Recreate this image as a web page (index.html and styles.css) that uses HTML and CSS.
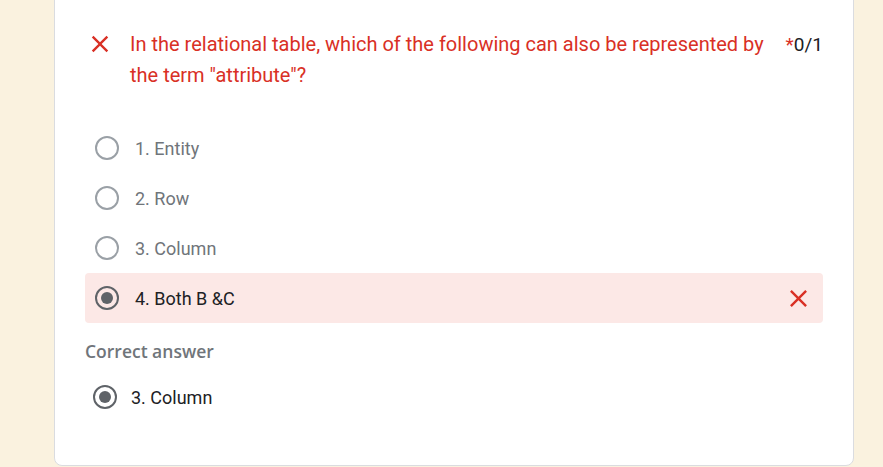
FILE: index.html
```html
<!DOCTYPE html>
<html>
<head>
<meta charset="utf-8">
<link rel="stylesheet" href="styles.css">
</head>
<body>
<div class="card">
  <div class="question">
    <svg class="q-icon" width="28" height="28" viewBox="0 0 24 24"><path d="M19 6.41 17.59 5 12 10.59 6.41 5 5 6.41 10.59 12 5 17.59 6.41 19 12 13.41 17.59 19 19 17.59 13.41 12z" fill="#d93025"/></svg>
    <div class="q-text">In the relational table, which of the following can also be represented by the term "attribute"?</div>
    <div class="score"><span class="star">*</span>0/1</div>
  </div>
  <div class="options">
    <div class="option"><span class="radio"></span><span class="label">1. Entity</span></div>
    <div class="option"><span class="radio"></span><span class="label">2. Row</span></div>
    <div class="option"><span class="radio"></span><span class="label">3. Column</span></div>
    <div class="option wrong"><span class="radio checked"></span><span class="label">4. Both B &amp;C</span>
      <svg class="wrong-icon" width="29" height="29" viewBox="0 0 24 24"><path d="M19 6.41 17.59 5 12 10.59 6.41 5 5 6.41 10.59 12 5 17.59 6.41 19 12 13.41 17.59 19 19 17.59 13.41 12z" fill="#d93025"/></svg>
    </div>
  </div>
  <div class="correct-title">Correct answer</div>
  <div class="correct-option"><span class="radio checked"></span><span class="label">3. Column</span></div>
</div>
</body>
</html>
```
FILE: styles.css
```css
html, body {
  margin: 0;
  padding: 0;
}
body {
  background: #faf2df;
  font-family: Roboto, "Liberation Sans", sans-serif;
  height: 467px;
  overflow: hidden;
}
.card {
  box-sizing: border-box;
  margin: -12px 0 0 54px;
  width: 800px;
  height: 478px;
  background: #fff;
  border: 1px solid #dadce0;
  border-radius: 8px;
  padding: 0 30px 0 30px;
}
.question {
  display: flex;
  align-items: flex-start;
  padding-top: 40px;
  padding-left: 1px;
}
.q-icon {
  flex: none;
  width: 28px;
  height: 28px;
  margin-top: 1px;
}
.q-text {
  margin-left: 16px;
  width: 645px;
  font-size: 20px;
  line-height: 31px;
  color: #d93025;
}
.score {
  margin-left: auto;
  font-size: 19px;
  line-height: 31px;
  color: #202124;
}
.star {
  color: #d93025;
}
.options {
  margin-top: 32px;
}
.option {
  display: flex;
  align-items: center;
  height: 50px;
  padding-left: 10px;
  padding-right: 10px;
  border-radius: 4px;
}
.radio {
  box-sizing: border-box;
  flex: none;
  width: 24px;
  height: 24px;
  border: 2px solid #9aa0a6;
  border-radius: 50%;
  position: relative;
}
.radio.checked {
  border-color: #5f6368;
}
.radio.checked::after {
  content: "";
  position: absolute;
  left: 4px;
  top: 4px;
  width: 12px;
  height: 12px;
  border-radius: 50%;
  background: #5f6368;
}
.label {
  margin-left: 16px;
  font-size: 18px;
  color: #70757a;
}
.option.wrong {
  background: #fce8e6;
}
.option.wrong .label {
  color: #202124;
}
.wrong-icon {
  margin-left: auto;
  width: 29px;
  height: 29px;
}
.correct-title {
  margin-top: 16px;
  font-family: "Open Sans", Roboto, sans-serif;
  font-size: 17.5px;
  font-weight: 600;
  color: #70757a;
}
.correct-option {
  display: flex;
  align-items: center;
  margin-top: 22px;
  padding-left: 8px;
}
.correct-option .label {
  margin-left: 14px;
  color: #202124;
}
```
